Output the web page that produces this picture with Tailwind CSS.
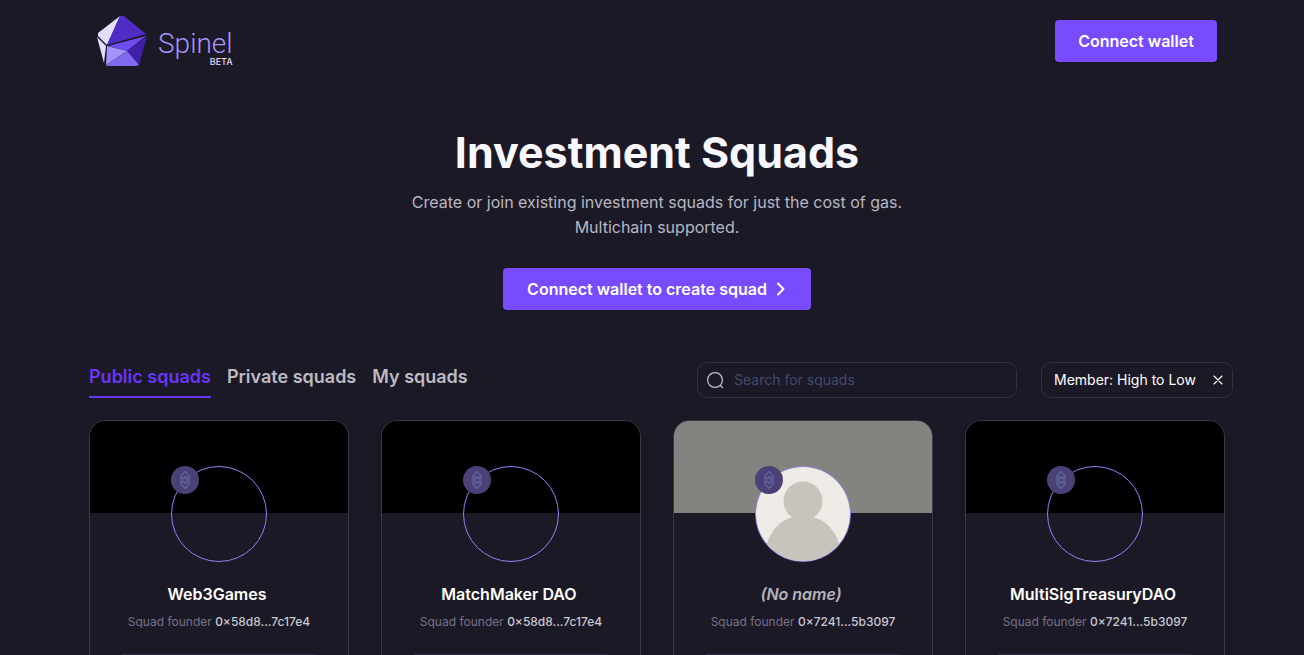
<!DOCTYPE html>
<html lang="en">

<head>
    <meta charset="UTF-8">
    <meta name="viewport" content="width=device-width, initial-scale=1.0">
    <title>Spinel - Investment Squads</title>
    <script src="https://cdn.jsdelivr.net/npm/@tailwindcss/browser@4"></script>
</head>

<body class="bg-[#1c1926] font-['Inter',sans-serif] text-white h-screen overflow-hidden pl-[10px]">
    <!-- Shared icons -->
    <svg class="hidden">
        <symbol id="chain" viewBox="0 0 28 28">
            <g fill="none" stroke="#5f629e" stroke-width="1.2" stroke-linejoin="round" stroke-linecap="round">
                <path d="M14 5.500 9.500 10.500l2 1.500L14 10.500l2.500 1.500 2-1.500z" />
                <path d="M14 22.500 9.500 17.500l2-1.500L14 17.500l2.500-1.500 2 1.500z" />
                <path d="M9 12.500 11.500 14 9 15.500M19 12.500 16.500 14l2.500 1.500" />
                <path d="M11.500 12.500 14 12l2.500 .5v3L14 16l-2.500-.5z" />
            </g>
        </symbol>
    </svg>

    <div class="max-w-[1136px] mx-auto">
        <!-- Header -->
        <header class="flex justify-between items-center px-2 h-[82px]">
            <a href="#" class="flex items-center gap-[10px]" aria-label="Spinel beta">
                <svg class="w-[51px] h-[52px]" viewBox="0 0 51 52">
                    <path fill="#e3deff" d="M23 1 1 18v3l9 9z" />
                    <path fill="#4f2dc4" d="M23 1h4l22 18-39 11z" />
                    <path fill="#e3deff" d="M0 22l9 9-2 17z" />
                    <path fill="#6d4cf0" d="M11 31l38-10-19 15z" />
                    <path fill="#3f1fa5" d="M50 21 42 50 30 36z" />
                    <path fill="#a594f9" d="M10 31l20 5L9 50z" />
                    <path fill="#8069ee" d="M9 50l21-14 12 14-3 1H10z" />
                </svg>
                <span class="flex flex-col items-end self-end">
                    <span class="font-['Roboto',sans-serif] text-[28px] leading-7 font-light text-[#a594f9]">Spinel</span>
                    <span class="text-[9px] leading-[10px] font-medium text-[#e3deff] -mt-px">BETA</span>
                </span>
            </a>
            <button class="bg-[#784bff] rounded h-[42px] w-[162px] font-semibold">Connect wallet</button>
        </header>

        <!-- Hero -->
        <section class="flex flex-col items-center text-center pt-10">
            <h1 class="text-[43px] leading-[60px] font-bold text-[#faf8ff]">Investment Squads</h1>
            <p class="mt-2 leading-[25px] text-[#b9b7c1]">Create or join existing investment squads for just the cost of gas.<br>Multichain supported.</p>
            <button class="mt-7 bg-[#784bff] rounded h-[42px] px-6 font-semibold flex items-center gap-2">
                Connect wallet to create squad
                <svg class="w-3 h-4" viewBox="0 0 12 16" fill="none" stroke="currentColor" stroke-width="2" stroke-linecap="round" stroke-linejoin="round">
                    <path d="M3 2.500 8.500 8 3 13.500" />
                </svg>
            </button>
        </section>

        <!-- Tabs and filters -->
        <div class="flex justify-between items-end mt-[52px] -mr-2">
            <nav class="flex gap-4 text-lg leading-[30px] font-semibold text-[#bdbbc1]">
                <a href="#" class="text-[#6936f5] border-b-2 border-[#6936f5] pb-1">Public squads</a>
                <a href="#" class="pb-1">Private squads</a>
                <a href="#" class="pb-1">My squads</a>
            </nav>
            <div class="flex gap-6 text-sm">
                <label class="flex items-center gap-[10px] w-80 h-9 border border-[#35323e] rounded-[10px] px-2">
                    <svg class="w-[18px] h-[18px]" viewBox="0 0 18 18" fill="none" stroke="#c4c2cb" stroke-width="1.200" stroke-linecap="round">
                        <circle cx="9" cy="9" r="7.400" />
                        <path d="M14.500 14.500l2 2" />
                    </svg>
                    <input type="text" aria-label="Search for squads" placeholder="Search for squads" class="grow bg-transparent outline-none placeholder:text-[#414a6e]">
                </label>
                <button class="flex items-center justify-between w-48 h-9 border border-[#35323e] rounded-[10px] pl-3 pr-2">
                    Member: High to Low
                    <svg class="w-3 h-3" viewBox="0 0 12 12" fill="none" stroke="currentColor" stroke-width="1.100" stroke-linecap="round">
                        <path d="M2 2l8 8M10 2l-8 8" />
                    </svg>
                </button>
            </div>
        </div>

        <!-- Squad cards -->
        <main class="grid grid-cols-4 gap-8 mt-[22px]">
            <article class="border border-[#3b3845] rounded-2xl overflow-hidden flex flex-col items-center shadow-xl shadow-black/10">
                <div class="w-full h-[92px] bg-black"></div>
                <div class="relative w-24 h-24 -mt-[47px] rounded-full border border-[#9580f5]">
                    <svg class="absolute -left-px -top-px w-7 h-7 rounded-full bg-[#4b4176]"><use href="#chain" /></svg>
                </div>
                <h2 class="mt-5 pr-1 leading-6 font-semibold">Web3Games</h2>
                <p class="mt-1 text-xs leading-6 text-[#75718a]">Squad founder <span class="font-medium text-[#c9c7d2]">0×58d8...7c17e4</span></p>
                <div class="w-[206px] h-16 mt-5 border border-[#2f2a45] rounded-lg"></div>
            </article>

            <article class="border border-[#3b3845] rounded-2xl overflow-hidden flex flex-col items-center shadow-xl shadow-black/10">
                <div class="w-full h-[92px] bg-black"></div>
                <div class="relative w-24 h-24 -mt-[47px] rounded-full border border-[#9580f5]">
                    <svg class="absolute -left-px -top-px w-7 h-7 rounded-full bg-[#4b4176]"><use href="#chain" /></svg>
                </div>
                <h2 class="mt-5 pr-1 leading-6 font-semibold">MatchMaker DAO</h2>
                <p class="mt-1 text-xs leading-6 text-[#75718a]">Squad founder <span class="font-medium text-[#c9c7d2]">0×58d8...7c17e4</span></p>
                <div class="w-[206px] h-16 mt-5 border border-[#2f2a45] rounded-lg"></div>
            </article>

            <article class="border border-[#3b3845] rounded-2xl overflow-hidden flex flex-col items-center shadow-xl shadow-black/10">
                <div class="w-full h-[92px] bg-[#838380]"></div>
                <div class="relative w-24 h-24 -mt-[47px] rounded-full border border-[#9580f5]">
                    <svg class="w-full h-full rounded-full bg-[#efece7]" viewBox="0 0 94 94" fill="#c8c4bd">
                        <circle cx="47" cy="34" r="19.500" />
                        <path d="M10 80C14 63 25 53 37 50q3-1 0-3h20q-3 2 0 3c12 3 23 13 27 30v14H10z" />
                    </svg>
                    <svg class="absolute -left-px -top-px w-7 h-7 rounded-full bg-[#4b4176]"><use href="#chain" /></svg>
                </div>
                <h2 class="mt-5 pr-1 leading-6 font-semibold italic text-[#b5b3b9]">(No name)</h2>
                <p class="mt-1 text-xs leading-6 text-[#75718a]">Squad founder <span class="font-medium text-[#c9c7d2]">0×7241...5b3097</span></p>
                <div class="w-[206px] h-16 mt-5 border border-[#2f2a45] rounded-lg"></div>
            </article>

            <article class="border border-[#3b3845] rounded-2xl overflow-hidden flex flex-col items-center shadow-xl shadow-black/10">
                <div class="w-full h-[92px] bg-black"></div>
                <div class="relative w-24 h-24 -mt-[47px] rounded-full border border-[#9580f5]">
                    <svg class="absolute -left-px -top-px w-7 h-7 rounded-full bg-[#4b4176]"><use href="#chain" /></svg>
                </div>
                <h2 class="mt-5 pr-1 leading-6 font-semibold">MultiSigTreasuryDAO</h2>
                <p class="mt-1 text-xs leading-6 text-[#75718a]">Squad founder <span class="font-medium text-[#c9c7d2]">0×7241...5b3097</span></p>
                <div class="w-[206px] h-16 mt-5 border border-[#2f2a45] rounded-lg"></div>
            </article>
        </main>
    </div>
</body>

</html>
